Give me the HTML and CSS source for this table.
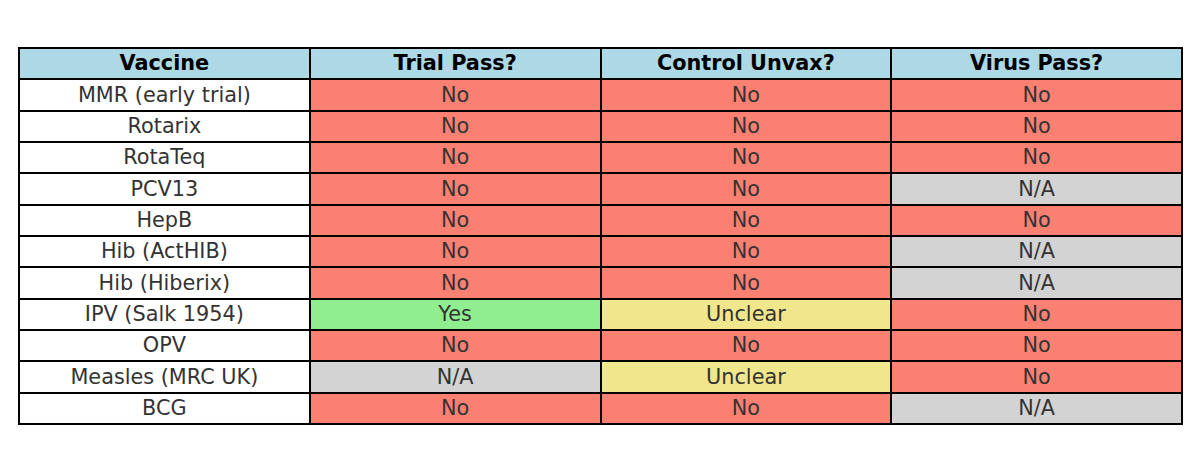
FILE: index.html
```html
<!DOCTYPE html>
<html>
<head>
<meta charset="utf-8">
<link rel="stylesheet" href="styles.css">
</head>
<body>
<div class="page">
<table class="vt">
<thead>
<tr><th>Vaccine</th><th>Trial Pass?</th><th>Control Unvax?</th><th>Virus Pass?</th></tr>
</thead>
<tbody>
<tr><td>MMR (early trial)</td><td class="no">No</td><td class="no">No</td><td class="no">No</td></tr>
<tr><td>Rotarix</td><td class="no">No</td><td class="no">No</td><td class="no">No</td></tr>
<tr><td>RotaTeq</td><td class="no">No</td><td class="no">No</td><td class="no">No</td></tr>
<tr><td>PCV13</td><td class="no">No</td><td class="no">No</td><td class="na">N/A</td></tr>
<tr><td>HepB</td><td class="no">No</td><td class="no">No</td><td class="no">No</td></tr>
<tr><td>Hib (ActHIB)</td><td class="no">No</td><td class="no">No</td><td class="na">N/A</td></tr>
<tr><td>Hib (Hiberix)</td><td class="no">No</td><td class="no">No</td><td class="na">N/A</td></tr>
<tr><td>IPV (Salk 1954)</td><td class="yes">Yes</td><td class="unc">Unclear</td><td class="no">No</td></tr>
<tr><td>OPV</td><td class="no">No</td><td class="no">No</td><td class="no">No</td></tr>
<tr><td>Measles (MRC UK)</td><td class="na">N/A</td><td class="unc">Unclear</td><td class="no">No</td></tr>
<tr><td>BCG</td><td class="no">No</td><td class="no">No</td><td class="na">N/A</td></tr>
</tbody>
</table>
</div>
</body>
</html>
```
FILE: styles.css
```css
html, body {
  margin: 0;
  padding: 0;
  background: #ffffff;
}
.page {
  padding: 47px 0 0 18px;
}
.vt {
  border-collapse: collapse;
  width: 1165px;
  table-layout: fixed;
  font-family: "DejaVu Sans", sans-serif;
  font-size: 20.8px;
}
.vt th, .vt td {
  border: 2px solid #000;
  height: 31.33px;
  padding: 0;
  text-align: center;
  vertical-align: middle;
  line-height: 1;
  box-sizing: border-box;
}
.vt th {
  background: #add8e6;
  color: #000;
  font-weight: bold;
}
.vt td {
  background: #ffffff;
  color: #333333;
}
.vt td.no { background: #fa8072; }
.vt td.na { background: #d3d3d3; }
.vt td.yes { background: #90ee90; }
.vt td.unc { background: #f0e68c; }
```
